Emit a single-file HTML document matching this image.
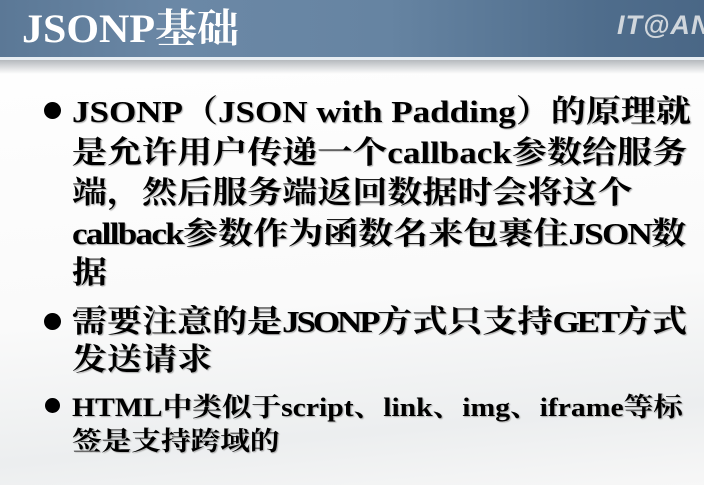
<!DOCTYPE html>
<html><head><meta charset="utf-8"><style>
body{margin:0;width:704px;height:485px;overflow:hidden;position:relative;
background:linear-gradient(175deg,#ffffff 0%,#fafafa 60%,#eceeef 85%,#f7f7f7 100%);
font-family:"Liberation Serif","Noto Serif CJK SC",serif;}
.hd{position:absolute;left:0;top:0;width:704px;height:57px;
background:linear-gradient(90deg,#5b7896 0%,#6b88a6 25%,#6684a2 55%,#4f6d8c 85%,#4a6786 100%);}
.hl{position:absolute;left:0;top:57px;width:704px;height:3px;background:#e8eef3;}
.sh{position:absolute;left:0;top:60px;width:704px;height:14px;background:linear-gradient(#b5b9bd,rgba(255,255,255,0));}
.t{position:absolute;left:22px;top:4px;color:#fff;font-weight:bold;font-size:40px;line-height:50px;transform:scaleX(1.05);transform-origin:left;}
.logo{position:absolute;left:617px;top:10px;font-family:"Liberation Sans",sans-serif;font-style:italic;font-weight:bold;font-size:27px;color:#d0d6dc;letter-spacing:1px}
.l{position:absolute;left:72px;white-space:nowrap;font-weight:bold;color:#000;font-size:31px;line-height:36px;text-shadow:1px 1px 1px #aaa;transform:scaleX(1.13);transform-origin:left;}
.e{letter-spacing:-1.5px}
.s{font-size:26px;transform:scaleX(1.14);}
.b{position:absolute;width:17px;height:17px;border-radius:50%;background:#000;left:44px;}
</style></head><body>
<div class="hd"></div><div class="hl"></div><div class="sh"></div>
<div class="t">JSONP基础</div>
<div class="logo">IT@AN</div>
<div class="b" style="top:102px"></div>
<div class="l" style="top:94px">JSONP（JSON with Padding）的原理就</div>
<div class="l" style="top:135px">是允许用户传递一个callback参数给服务</div>
<div class="l" style="top:175px">端，然后服务端返回数据时会将这个</div>
<div class="l" style="top:216px"><span class="e">callback</span>参数作为函数名来包裹住<span class="e">JSON</span>数</div>
<div class="l" style="top:255px">据</div>
<div class="b" style="top:313px"></div>
<div class="l" style="top:304px">需要注意的是<span style="letter-spacing:-2.8px">JSONP</span>方式只支持<span style="letter-spacing:-2.8px">GET</span>方式</div>
<div class="l" style="top:342px">发送请求</div>
<div class="b" style="top:398px;width:15px;height:15px;left:45px"></div>
<div class="l s" style="top:390px">HTML中类似于script、link、img、iframe等标</div>
<div class="l s" style="top:424px">签是支持跨域的</div>
</body></html>
